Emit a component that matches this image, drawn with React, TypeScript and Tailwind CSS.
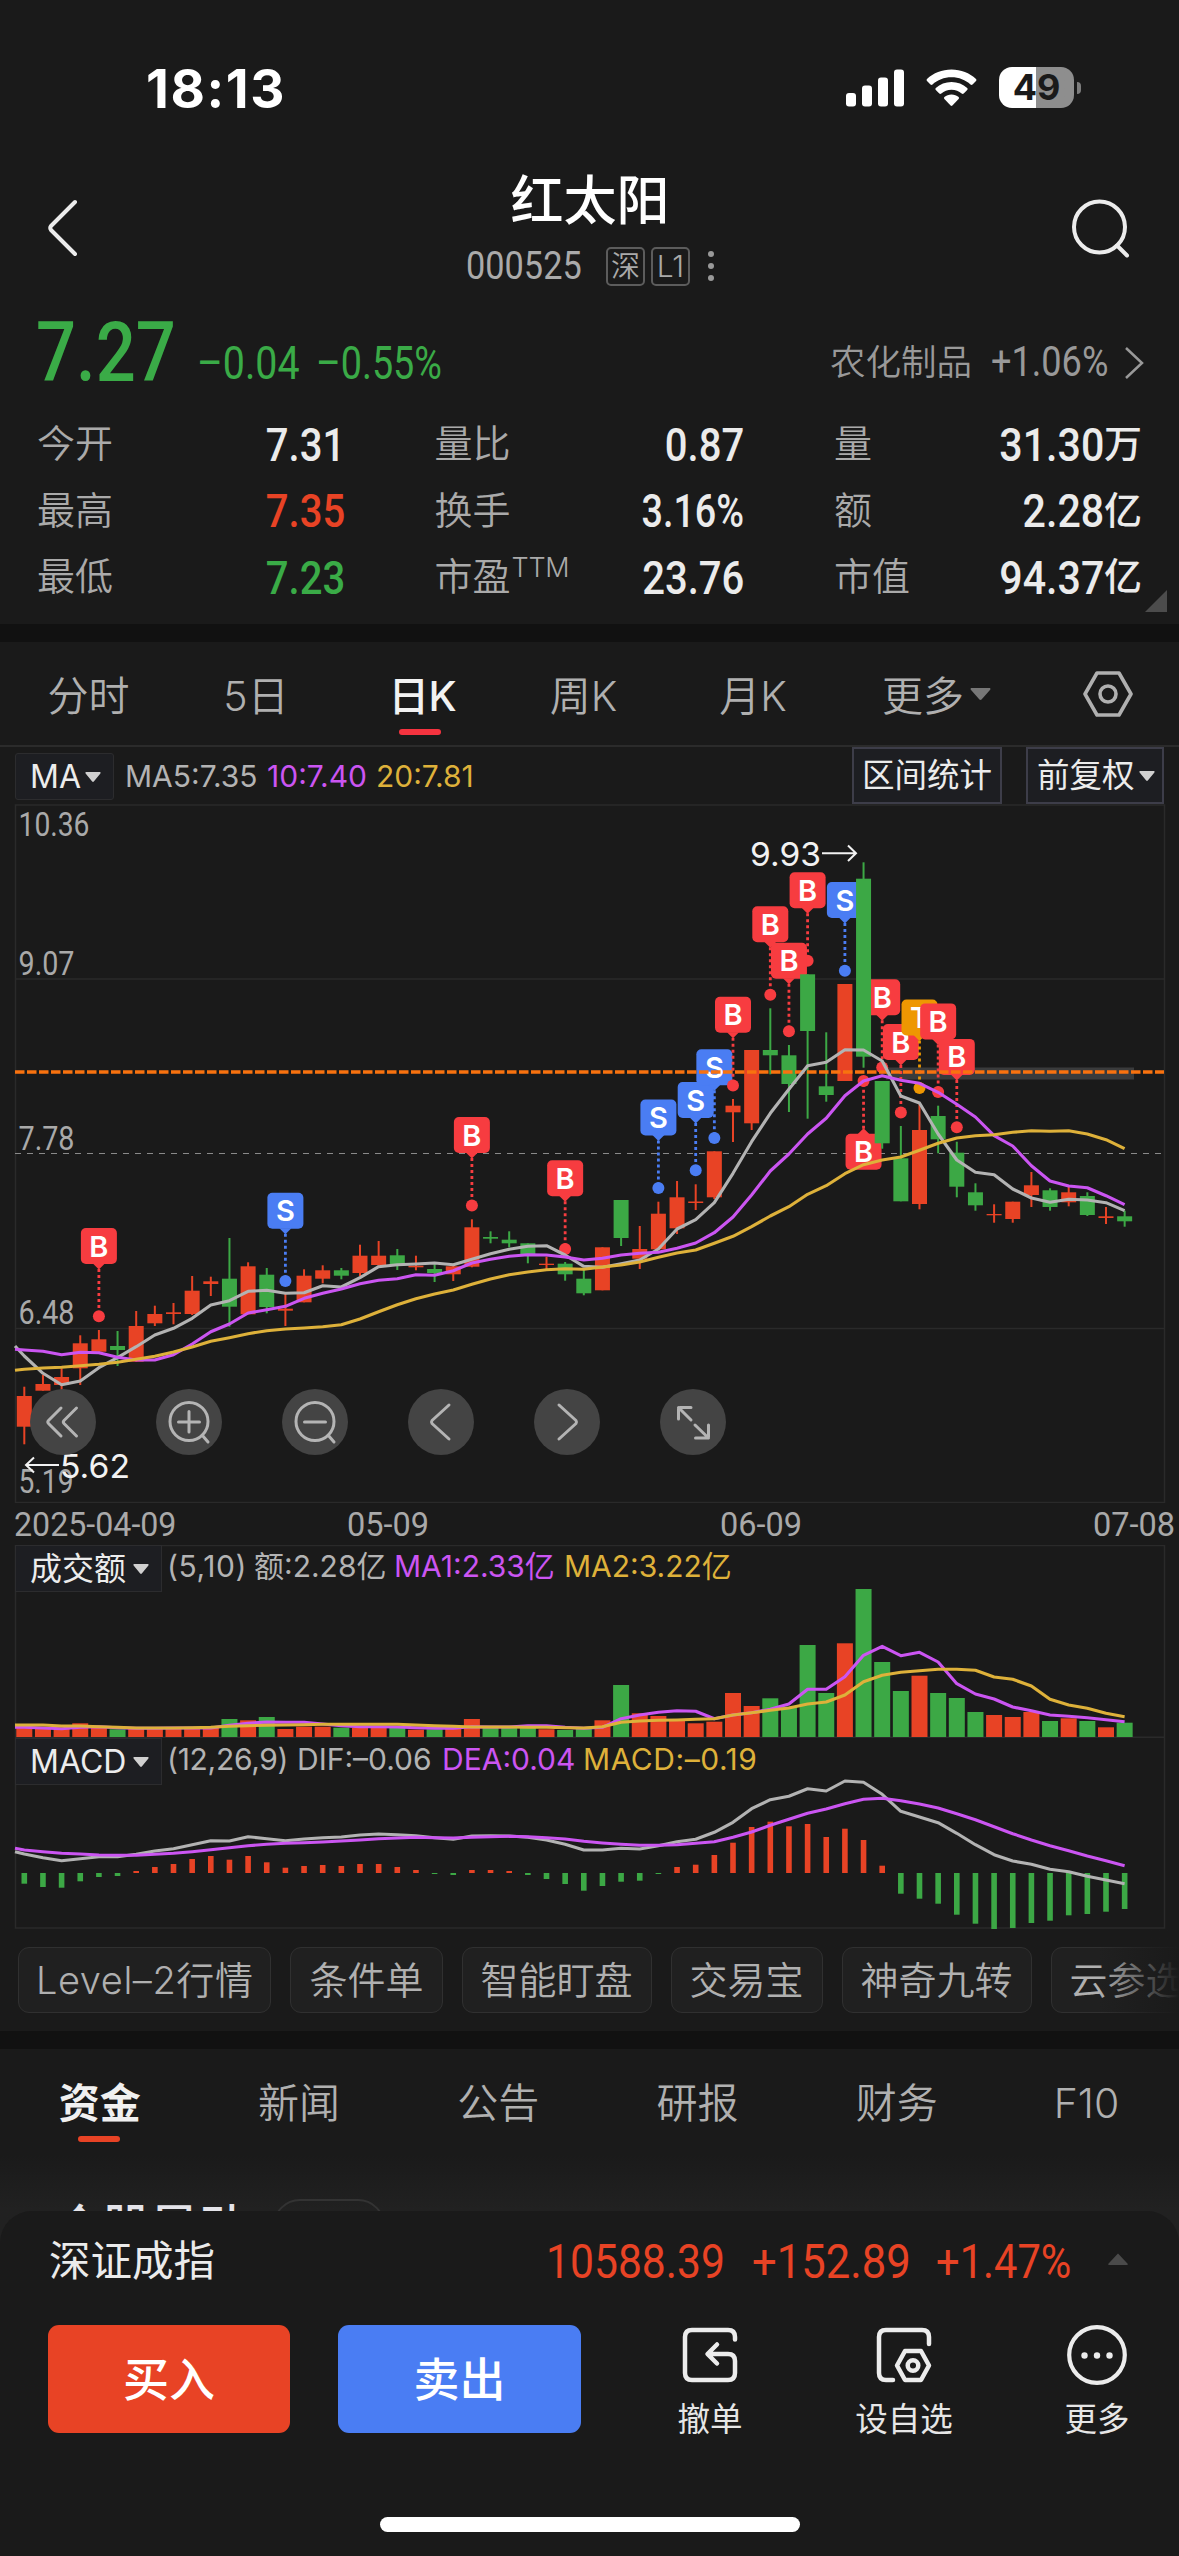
import type { ReactNode } from 'react';
import clsx from 'clsx';

type Candle = [up: number, high: number, top: number, bottom: number, low: number];

const UP = '#e84325';
const DOWN = '#3ca845';
const GRAY = '#b3b3b3';
const PURPLE = '#cb55f2';
const YELLOW = '#deb13a';

const STEP = 18.65;
const cx = (i: number) => 24.3 + i * STEP;

const candles: Candle[] = [
  [1, 1386.7, 1396, 1426.7, 1444.3], [1, 1375, 1384, 1390.7, 1390.7], [1, 1368.3, 1377, 1385, 1391.7],
  [1, 1335.3, 1343.3, 1368.3, 1385], [1, 1330, 1339.3, 1351.7, 1351.7], [0, 1331, 1346, 1350, 1366],
  [1, 1311, 1326, 1361.7, 1361.7], [1, 1305.7, 1314, 1323.3, 1326], [1, 1303, 1312.3, 1314, 1324.3],
  [1, 1276, 1290.7, 1314, 1315], [1, 1276.7, 1281.3, 1284, 1296], [0, 1238, 1278.7, 1306.7, 1326.7],
  [1, 1262.3, 1266.3, 1314.3, 1314.3], [0, 1268, 1274.7, 1307, 1313.3], [1, 1293.3, 1308.7, 1310.7, 1326],
  [1, 1269.3, 1275.7, 1302.3, 1302.3], [1, 1265.3, 1270.3, 1278.7, 1283.3], [0, 1268, 1270.3, 1275.7, 1279.3],
  [1, 1244.7, 1255.7, 1273, 1276], [1, 1241, 1255.7, 1265, 1265.7], [0, 1249, 1255.3, 1265.3, 1270],
  [1, 1255.7, 1265.7, 1267.3, 1270.3], [0, 1264.3, 1269, 1273, 1282], [1, 1265.3, 1266.3, 1274.3, 1281],
  [1, 1219.3, 1227.3, 1266.7, 1267.3], [0, 1231.3, 1237, 1238.7, 1243.3], [0, 1231.3, 1239.7, 1243.3, 1247.3],
  [0, 1243.3, 1243.3, 1255, 1263.3], [1, 1256.7, 1263.7, 1265, 1269], [0, 1262, 1263.7, 1274.3, 1280.7],
  [0, 1270, 1278.7, 1293.3, 1295.3], [1, 1247.3, 1247.3, 1290.3, 1290.3], [0, 1200, 1200, 1238, 1246],
  [1, 1226, 1249, 1258.7, 1269], [1, 1201.7, 1213.7, 1249.3, 1249.3], [1, 1181, 1197.3, 1228.3, 1234],
  [1, 1184.3, 1201.5, 1203, 1210], [1, 1151.3, 1151.3, 1197.3, 1199], [1, 1099, 1105.7, 1112.3, 1142],
  [1, 1050, 1050, 1123.3, 1130], [0, 1008.3, 1050, 1055.3, 1074.3], [0, 1045, 1055.3, 1084, 1112],
  [0, 974.3, 974.3, 1031, 1118.7], [0, 1032.3, 1086.3, 1095, 1101.7], [1, 984, 984, 1081, 1081],
  [0, 862.3, 878.7, 1056.7, 1067.7], [0, 1081, 1081, 1143.3, 1148.7], [0, 1126, 1158.3, 1201.3, 1201.3],
  [1, 1102.7, 1130, 1204, 1209.3], [0, 1105.7, 1116, 1139.3, 1153.3], [0, 1141.7, 1152.7, 1186.7, 1197.3],
  [0, 1183.3, 1192.3, 1205.3, 1210.7], [1, 1204.3, 1214, 1215.3, 1222.7], [1, 1201.7, 1201.7, 1219, 1222.7],
  [1, 1172, 1185.3, 1195, 1207], [0, 1188.3, 1190.3, 1207, 1210.7], [1, 1186.7, 1192.3, 1202.3, 1206.3],
  [0, 1192.3, 1196, 1215, 1216], [1, 1207, 1216.3, 1218, 1224], [0, 1210.7, 1216.3, 1221.3, 1226.7],
];

// moving averages, first value sits on the left frame edge
const ma5 = [
  1346, 1356, 1373.3, 1384.7, 1381, 1367.7, 1357.7, 1346.7, 1335, 1328.3, 1318.3, 1305, 1300.7, 1291.3, 1290.3,
  1293.3, 1292.7, 1285.7, 1287, 1277.7, 1266.7, 1264.7, 1264, 1263, 1264.7, 1259.3, 1253.7, 1249.3, 1246.3, 1245.7,
  1255, 1266.3, 1267.3, 1263.7, 1260, 1249, 1229, 1219.7, 1202.7, 1173.3, 1141.7, 1113.3, 1089.3, 1065.7, 1062.3,
  1049.7, 1050, 1061, 1096, 1103, 1134, 1160, 1172.3, 1174.7, 1189, 1198, 1202.3, 1199.3, 1200, 1202.7, 1210.7,
];
const ma10 = [
  1349.3, 1350, 1351.3, 1354.7, 1352.3, 1352.7, 1357.3, 1360, 1360, 1354.7, 1344, 1331.7, 1324, 1313, 1309.7,
  1306.3, 1298.3, 1293.3, 1289, 1283.7, 1280.3, 1278.7, 1274.7, 1275.3, 1270.7, 1263, 1259.3, 1256.3, 1254.7, 1255,
  1257, 1260, 1258.3, 1255, 1253.3, 1252.3, 1248.3, 1243, 1232.7, 1217, 1195, 1171, 1154, 1134, 1118.3, 1095.7,
  1081, 1075.7, 1080.3, 1083.3, 1092.3, 1104.3, 1117, 1135.7, 1146, 1165.7, 1181, 1186, 1187.7, 1195.7, 1204.7,
];
const ma20 = [
  1370.3, 1369.3, 1368, 1367.3, 1365.7, 1364.3, 1362.3, 1359.3, 1356.3, 1352, 1347, 1341.3, 1337.7, 1333.7, 1330.7,
  1329, 1328, 1326.7, 1324.7, 1319, 1311.7, 1304.7, 1298.7, 1294, 1290, 1284.3, 1279, 1274.7, 1272, 1269.7, 1268.7,
  1269.3, 1267, 1265, 1262, 1257.3, 1253, 1250, 1243.3, 1236.3, 1226.7, 1216, 1206.7, 1194.3, 1185.7, 1173.7,
  1164.7, 1160, 1157, 1150.3, 1143.3, 1138, 1135.7, 1134.7, 1132.3, 1130.7, 1131.3, 1130.7, 1134, 1139.7, 1148.7,
];

const volume = [
  1727.3, 1727.7, 1727.7, 1723.3, 1727.3, 1729.3, 1728.7, 1728, 1728.7, 1729, 1728, 1719, 1720.3, 1717, 1729, 1726.7,
  1726.7, 1727.7, 1728, 1727.7, 1728, 1729.7, 1729.3, 1728.7, 1719, 1728, 1728, 1728, 1729.3, 1730, 1728.7, 1720.3,
  1685, 1713.3, 1716, 1720, 1723.3, 1721.7, 1693, 1706, 1698.3, 1706.7, 1645, 1693, 1643.3, 1589, 1662, 1691, 1675.7,
  1693, 1698, 1712, 1715, 1717, 1712, 1721, 1718.3, 1721, 1727.3, 1722.7,
];
const volMa1 = [
  1727.3, 1727.3, 1728, 1728.7, 1727.3, 1726.7, 1727.7, 1728.3, 1728.2, 1728, 1728, 1728, 1725.3, 1723.3, 1722,
  1722.3, 1722.3, 1724, 1725.7, 1726.7, 1726.8, 1727, 1727.7, 1728.3, 1728.3, 1726.7, 1727, 1727, 1725.7, 1725.7,
  1727.3, 1728.3, 1727.3, 1718.7, 1715, 1712.3, 1710.7, 1711.3, 1718.7, 1715, 1712.7, 1709.3, 1704, 1689.3, 1689.3,
  1676.7, 1655.3, 1646.3, 1655.7, 1652.3, 1662, 1683.7, 1694, 1699, 1707, 1710.7, 1715, 1716.3, 1717.7, 1719.7,
  1721.7,
];
const volMa2 = [
  1725, 1725, 1725, 1726, 1726, 1726.7, 1727.3, 1728, 1728, 1728, 1727.7, 1727.3, 1726.3, 1725.7, 1725.3, 1725,
  1724.7, 1724.3, 1724.3, 1724.3, 1724.3, 1724.3, 1725, 1725.7, 1726.3, 1727, 1727, 1727, 1727.2, 1727.3, 1727.7,
  1728, 1726.7, 1722.3, 1721, 1720.3, 1720, 1719.3, 1718.7, 1715, 1712.7, 1710.3, 1708, 1704, 1702, 1695, 1681.7,
  1675.3, 1672.3, 1670.7, 1669.3, 1669.3, 1670.3, 1677, 1679.3, 1686, 1699.3, 1705, 1708.3, 1713.3, 1716.7,
];

const macd = [
  10.7, 14, 14.7, 8.3, 4, 3, -2, -6, -9, -14, -17, -13.3, -17, -10.7, -5.3, -7, -8, -7, -9, -9, -6, -3, 1, 2, -3, -3,
  -2, 2, 6, 11, 17.7, 13, 8.7, 7.7, 1, -6, -8.3, -18, -30.3, -46, -51.3, -46.7, -49, -36, -44.3, -33, -7.3, 20.7,
  25.7, 30.7, 41.7, 50.7, 56, 55, 50, 47.7, 42.3, 41, 38.7, 36,
];
const dif = [
  1851.7, 1854, 1857.7, 1860.7, 1858.7, 1856.7, 1856.7, 1854.3, 1851, 1848.7, 1844.7, 1840.7, 1841, 1836.7, 1838.7,
  1840.7, 1839, 1837.7, 1837, 1835, 1834, 1834.7, 1835.7, 1837.7, 1839.3, 1836, 1835.7, 1836, 1837.3, 1840, 1844.3,
  1850, 1850, 1848.3, 1849, 1845.7, 1841.7, 1839.3, 1832.3, 1822.3, 1808.7, 1799.7, 1796.3, 1788.7, 1791, 1781,
  1782.3, 1794.3, 1811.3, 1817, 1822.7, 1833.3, 1844.7, 1854.7, 1861, 1864.3, 1869.3, 1871.7, 1876.3, 1880, 1883.7,
];
const dea = [
  1848.3, 1850, 1851.7, 1853.3, 1854, 1855, 1855.3, 1855.3, 1854.3, 1853.3, 1851.7, 1849.7, 1847.7, 1845.7, 1844.3,
  1843.3, 1842.7, 1842, 1841, 1840, 1838.7, 1838, 1837.3, 1837.7, 1838, 1837.3, 1836.7, 1836.3, 1836.7, 1837.7, 1839,
  1841.3, 1843, 1844.3, 1845.3, 1845.3, 1844.7, 1843.3, 1841.7, 1837.3, 1832, 1825.3, 1819.3, 1813.3, 1809, 1803.7,
  1799.3, 1798.3, 1800.7, 1804, 1808, 1813.7, 1819.7, 1826.7, 1833.7, 1840, 1845.7, 1850.7, 1856, 1860.7, 1865.7,
];

interface Trade {
  i: number;
  side: 'B' | 'S' | 'T';
  top: number;
  dot: number;
}

const trades: Trade[] = [
  { i: 4, side: 'B', top: 1228, dot: 1316.3 },
  { i: 14, side: 'S', top: 1192.7, dot: 1281 },
  { i: 24, side: 'B', top: 1117, dot: 1205.6 },
  { i: 29, side: 'B', top: 1160.2, dot: 1249 },
  { i: 34, side: 'S', top: 1099.5, dot: 1188 },
  { i: 36, side: 'S', top: 1082, dot: 1170.3 },
  { i: 37, side: 'S', top: 1049.3, dot: 1138 },
  { i: 38, side: 'B', top: 996.8, dot: 1085.6 },
  { i: 40, side: 'B', top: 906.3, dot: 994.8 },
  { i: 42, side: 'B', top: 872.2, dot: 960.8 },
  { i: 41, side: 'B', top: 942.7, dot: 1031.3 },
  { i: 44, side: 'S', top: 882, dot: 970.7 },
  { i: 45, side: 'B', top: 1133.8, dot: 1081 },
  { i: 46, side: 'B', top: 979.2, dot: 1067.5 },
  { i: 47, side: 'B', top: 1024, dot: 1112.4 },
  { i: 48, side: 'T', top: 999.5, dot: 1088 },
  { i: 49, side: 'B', top: 1003.4, dot: 1092 },
  { i: 50, side: 'B', top: 1038.9, dot: 1127.3 },
];

const sideColor = { B: '#f73c40', S: '#4a7df3', T: '#ee9702' };

const toLine = (ys: number[]) =>
  ys.map((y, n) => `${n === 0 ? 15 : cx(n - 1).toFixed(1)},${y}`).join(' ');

function Line({ ys, color }: { ys: number[]; color: string }) {
  return <polyline points={toLine(ys)} fill="none" stroke={color} strokeWidth={3.1} strokeLinejoin="round" />;
}

function TradeMark({ i, side, top, dot }: Trade) {
  const x = cx(i);
  const c = sideColor[side];
  const below = top > dot;
  const from = below ? top - 5 : top + 41;
  return (
    <g>
      <line x1={x} x2={x} y1={from} y2={dot} stroke={c} strokeWidth={2.8} strokeDasharray="3 3" />
      <circle cx={x} cy={dot} r={6} fill={c} />
      <rect x={x - 18} y={top} width={36} height={36} rx={5} fill={c} />
      {below ? (
        <path d={`M${x - 6} ${top + 0.5}L${x} ${top - 5.5}L${x + 6} ${top + 0.5}Z`} fill={c} />
      ) : (
        <path d={`M${x - 6} ${top + 35.5}L${x} ${top + 41.5}L${x + 6} ${top + 35.5}Z`} fill={c} />
      )}
      <text x={x} y={top + 28.5} textAnchor="middle" fill="#fff" className="font-['Inter'] text-[29px] font-semibold">
        {side}
      </text>
    </g>
  );
}

function PriceChart() {
  const labels: [string, number, number][] = [
    ['10.36', 836, 71], ['9.07', 975, 56], ['7.78', 1149.5, 56], ['6.48', 1323.5, 56], ['5.19', 1492.5, 55],
  ];
  return (
    <svg width={1179} height={699} viewBox="0 804 1179 699" className="block">
      <path d="M15.5 1503V805H1164.5V1503" fill="none" stroke="#2a2a2a" strokeWidth={1.5} />
      <path d="M15 979H1164M15 1328.5H1164M15 1502.5H1165" stroke="#2a2a2a" strokeWidth={1.5} />
      <path d="M15 1153.5H1164" stroke="#8a8a8a" strokeWidth={1} strokeDasharray="6 6" />
      {labels.map(([t, y, w]) => (
        <text key={t} x={18.5} y={y} textLength={w} lengthAdjust="spacingAndGlyphs" fill="#a9a9a9" className="font-['Roboto'] text-[32.5px]">
          {t}
        </text>
      ))}
      <rect x={886} y={1067.5} width={248} height={12} fill="#3a3b3c" />
      {trades.map((t) => (
        <TradeMark key={t.i} {...t} />
      ))}
      {candles.map(([up, high, top, bottom, low], i) => (
        <g key={i} fill={up ? UP : DOWN}>
          <rect x={cx(i) - 1} y={high} width={2} height={low - high} />
          <rect x={cx(i) - 7.5} y={top} width={15} height={bottom - top} />
        </g>
      ))}
      <path d="M15 1072H1164" stroke="#f8720f" strokeWidth={3.4} strokeDasharray="9.500 2.500" />
      <Line ys={ma5} color={GRAY} />
      <Line ys={ma10} color={PURPLE} />
      <Line ys={ma20} color={YELLOW} />
      <g fill="#f2f2f2" className="font-['Inter'] text-[33px]">
        <text x={750} y={865.5} textLength={71} lengthAdjust="spacingAndGlyphs">9.93</text>
        <text x={60} y={1478} textLength={70} lengthAdjust="spacingAndGlyphs">5.62</text>
      </g>
      <path d="M822 853.3H855M848 845.5L856 853.3L848 861M59 1465H26M34 1457.5L26 1465L34 1472.5" fill="none" stroke="#f2f2f2" strokeWidth={2} />
    </svg>
  );
}

function ChartControls() {
  const icons: ReactNode[] = [
    <path d="M31 19L18.500 31.500Q17 33 18.500 34.500L31 47M46.500 19L34 31.500Q32.500 33 34 34.500L46.500 47" />,
    <path d="M33 13.5A19 19 0 1 0 33 51.5A19 19 0 1 0 33 13.5M46 46L52 53M33 22.5V43M22.5 33H43.5" />,
    <path d="M33 13.5A19 19 0 1 0 33 51.5A19 19 0 1 0 33 13.5M46 46L52 53M22.5 33H43.5" />,
    <path d="M41 16L24 31.5Q23 33 24 34.5L41 50" />,
    <path d="M25 16L42 31.5Q43 33 42 34.5L25 50" />,
    <path d="M31 18.5H20Q18.500 18.500 18.500 20V30M18.500 18.500L31 31M35 36L48.500 49M48.500 36V47.500Q48.500 49 47 49H35.500" />,
  ];
  return (
    <div className="absolute left-[30px] top-[585px] flex gap-[60px]">
      {icons.map((icon, i) => (
        <button key={i} className="size-[66px] rounded-full bg-[#444444]">
          <svg width={66} height={66} viewBox="0 0 66 66" fill="none" stroke="#b4b4b4" strokeWidth={3} strokeLinecap="round" strokeLinejoin="round">
            {icon}
          </svg>
        </button>
      ))}
    </div>
  );
}

function Caret({ className = '', up = false }: { className?: string; up?: boolean }) {
  return (
    <svg viewBox="0 0 20 12" preserveAspectRatio="none" className={clsx('shrink-0', className)} fill="currentColor">
      {up ? <path d="M10 0.500L19 11Q19 12 18 12H2Q1 12 1 11Z" /> : <path d="M1 0H19Q20 1 19 2L11 11.500Q10 12.300 9 11.500L1 2Q0 1 1 0Z" />}
    </svg>
  );
}

// condensed figures, scaled inside a box of known width
function Din({ children, className = '' }: { children: ReactNode; className?: string }) {
  return <span className={clsx("inline-block origin-left whitespace-nowrap font-['Roboto']", className)}>{children}</span>;
}

function VolumeChart() {
  return (
    <div className="relative h-[193px]">
      <svg width={1179} height={193} viewBox="0 1545 1179 193" className="block">
        <path d="M15.5 1738V1545.500H1164.500V1738M15 1737.300H1164" fill="none" stroke="#2a2a2a" strokeWidth={1.5} />
        {volume.map((y, i) => (
          <rect key={i} x={cx(i) - 8} y={y} width={16} height={1737 - y} fill={candles[i][0] ? UP : DOWN} />
        ))}
        <Line ys={volMa1} color={PURPLE} />
        <Line ys={volMa2} color={YELLOW} />
      </svg>
      <IndicatorHeader name="成交额">
        <span className="w-[87px] tracking-[0.02em]">(5,10)</span>
        <span className="w-[140px]">额:2.28亿</span>
        <span className="w-[170px] text-[#cb55f2]">MA1:2.33亿</span>
        <span className="text-[#deb13a]">MA2:3.22亿</span>
      </IndicatorHeader>
    </div>
  );
}

function MacdChart() {
  return (
    <div className="relative h-[191px]">
      <svg width={1179} height={191} viewBox="0 1738 1179 191" className="block">
        <path d="M15.5 1738V1928H1164.500V1738" fill="none" stroke="#2a2a2a" strokeWidth={1.5} />
        {macd.map((v, i) => (
          <rect key={i} x={cx(i) - 2.8} y={v < 0 ? 1873 + v : 1873} width={5.6} height={Math.abs(v)} fill={v < 0 ? UP : DOWN} />
        ))}
        <Line ys={dif} color={GRAY} />
        <Line ys={dea} color={PURPLE} />
      </svg>
      <IndicatorHeader name="MACD">
        <span className="w-[130px] tracking-[-0.01em]">(12,26,9)</span>
        <span className="w-[145px]">DIF:–0.06</span>
        <span className="w-[141px] text-[#cb55f2]">DEA:0.04</span>
        <span className="tracking-[0.018em] text-[#deb13a]">MACD:–0.19</span>
      </IndicatorHeader>
    </div>
  );
}

function IndicatorHeader({ name, children }: { name: string; children: ReactNode }) {
  return (
    <div className="absolute left-[15px] top-0 flex h-[47px]">
      <button className="flex w-[147px] items-center border border-[#2c2c2e] bg-[#1d1e22] pl-[14px] text-[32px] text-[#ececec]">
        <span className="w-[99px] text-left">{name}</span>
        <Caret className="ml-[4px] h-[10px] w-[16px] text-[#d0d0d0]" />
      </button>
      <div className="flex whitespace-nowrap pl-[5px] text-[30px] leading-[43px] text-[#b3b3b3]">{children}</div>
    </div>
  );
}

function StatusBar() {
  return (
    <div className="flex h-[150px] items-start pl-[146px] pt-[59px]">
      <div className="w-[700px] font-['Inter'] text-[53px] font-bold leading-[60px] tracking-[0.03em] text-white">18:13</div>
      <svg width={58} height={38} viewBox="0 0 58 38" className="mt-[10px]" fill="#fff">
        <rect x={0} y={24} width={10} height={13.5} rx={3} />
        <rect x={16} y={16.500} width={10} height={21} rx={3} />
        <rect x={32} y={8.500} width={10} height={29} rx={3} />
        <rect x={48} y={0.500} width={10} height={37} rx={3} />
      </svg>
      <svg width={51} height={38} viewBox="0 0 51 38" className="ml-[22px] mt-[10px]" fill="#fff">
        <path d="M25.500 0.500C35 0.500 43.500 4 50 10Q51 11 50 12L46.500 15.500Q45.500 16.400 44.500 15.500C39.500 11 33 8.300 25.500 8.300C18 8.300 11.500 11 6.500 15.500Q5.500 16.400 4.500 15.500L1 12Q0 11 1 10C7.500 4 16 0.500 25.500 0.500Z" />
        <path d="M25.500 13C31.500 13 37 15.200 41.200 19Q42.200 20 41.200 21L37.700 24.500Q36.700 25.300 35.700 24.500C33 22 29.500 20.700 25.500 20.700C21.500 20.700 18 22 15.300 24.500Q14.300 25.300 13.300 24.500L9.800 21Q8.800 20 9.800 19C14 15.200 19.500 13 25.500 13Z" />
        <path d="M25.500 25.500C28.300 25.500 30.700 26.500 32.600 28Q33.500 29 32.600 30L26.400 36.500Q25.500 37.400 24.600 36.500L18.400 30Q17.500 29 18.400 28C20.300 26.500 22.700 25.500 25.500 25.500Z" />
      </svg>
      <div className="ml-[22px] mt-[8px] flex h-[41px] w-[75px] items-center justify-center rounded-[13px] bg-gradient-to-r from-white from-50% to-[#8e8e8e] to-50% font-['Inter'] text-[36px] font-bold leading-[41px] text-[#1a1a1a]">
        49
      </div>
      <div className="ml-[3px] mt-[23px] h-[12px] w-[4px] rounded-r-full bg-[#7d7d7d]" />
    </div>
  );
}

function Header() {
  return (
    <div className="flex h-[150px]">
      <svg width={440} height={150} viewBox="0 0 440 150" fill="none" stroke="#ececec" strokeWidth={4} strokeLinecap="round" strokeLinejoin="round">
        <path d="M75 52L51 76Q49.500 78 51 80L75 104" />
      </svg>
      <div className="flex w-[300px] flex-col items-center">
        <h1 className="mt-[13px] h-[76px] text-[53px] font-medium leading-[76px] text-white">红太阳</h1>
        <div className="mt-[4px] flex w-full items-center pl-[26px] text-[#aaaaaa]">
          <div className="w-[140px]">
            <Din className="scale-x-[.88] text-[39px] leading-[46px]">000525</Din>
          </div>
          <span className="flex size-[39px] items-center justify-center rounded-[5px] border-2 border-[#5c5c5c] text-[29px] font-[350] leading-none">深</span>
          <span className="ml-[6px] flex size-[39px] items-center justify-center rounded-[5px] border-2 border-[#5c5c5c] font-['Inter'] text-[30px] font-light leading-none">L1</span>
          <span className="ml-[18px] flex flex-col gap-[6px]">
            <i className="size-[6px] rounded-full bg-[#999]" />
            <i className="size-[6px] rounded-full bg-[#999]" />
            <i className="size-[6px] rounded-full bg-[#999]" />
          </span>
        </div>
      </div>
      <svg width={439} height={150} viewBox="740 150 439 150" fill="none" stroke="#ececec" strokeWidth={4} strokeLinecap="round">
        <circle cx={1099.500} cy={227} r={25.500} />
        <path d="M1117 245.500L1127 255.500" />
      </svg>
    </div>
  );
}

function QuoteRow() {
  return (
    <div className="flex h-[100px] pl-[36px] text-[#3aab47]">
      <div className="w-[161px]">
        <Din className="scale-x-[.85] text-[83px] font-medium leading-[105px]">7.27</Din>
      </div>
      <div className="w-[119px] pt-[37px]">
        <Din className="scale-x-[.855] text-[46px] leading-[52px]">–0.04</Din>
      </div>
      <div className="w-[514px] pt-[37px]">
        <Din className="scale-x-[.82] text-[46px] leading-[52px]">–0.55%</Din>
      </div>
      <div className="w-[161px] pt-[38px] text-[35.500px] font-[350] leading-[50px] text-[#999]">农化制品</div>
      <div className="w-[133px] pt-[37px] text-[#999]">
        <Din className="scale-x-[.86] text-[42px] leading-[50px]">+1.06%</Din>
      </div>
      <svg width={22} height={32} viewBox="0 0 22 32" className="mt-[47px]" fill="none" stroke="#999" strokeWidth={2.500}>
        <path d="M2 1L18 16L2 31" />
      </svg>
    </div>
  );
}

interface StatProps {
  label: string;
  value: string;
  unit?: string;
  sup?: string;
  color?: string;
}

const stats: StatProps[] = [
  { label: '今开', value: '7.31' },
  { label: '量比', value: '0.87' },
  { label: '量', value: '31.30', unit: '万' },
  { label: '最高', value: '7.35', color: 'text-[#e84325]' },
  { label: '换手', value: '3.16%' },
  { label: '额', value: '2.28', unit: '亿' },
  { label: '最低', value: '7.23', color: 'text-[#3aab47]' },
  { label: '市盈', sup: 'TTM', value: '23.76' },
  { label: '市值', value: '94.37', unit: '亿' },
];

const statScale = (s: StatProps) => {
  if (s.unit) return 'scale-x-[.895]';
  return s.value.endsWith('%') ? 'scale-x-[.82]' : 'scale-x-[.87]';
};

function Stats() {
  return (
    <div className="relative grid h-[224px] auto-rows-[66.5px] grid-cols-[305px_307px_307px] gap-x-[92.500px] pl-[37px] pt-[10px]">
      {stats.map((s) => (
        <div key={s.label} className="flex h-[66px] items-center whitespace-nowrap">
          <span className="text-[38px] font-[350] leading-[56px] text-[#aaaaaa]">{s.label}</span>
          {s.sup && <span className="mb-[18px] ml-[1px] font-['Inter'] text-[27px] font-light leading-none tracking-[-0.01em] text-[#aaaaaa]">{s.sup}</span>}
          <span className={clsx('ml-auto flex items-center', s.unit ? '-mr-[1px]' : '-mr-[3px]', s.color ?? 'text-[#ebebeb]')}>
            <Din className={clsx('origin-right! mt-[3px] text-[46px] font-medium leading-[56px]', statScale(s))}>{s.value}</Din>
            {s.unit && <span className="text-[38px] font-medium leading-[56px]">{s.unit}</span>}
          </span>
        </div>
      ))}
      <svg width={22} height={22} viewBox="0 0 22 22" className="absolute bottom-[12px] right-[12px]" fill="#4c4c4c">
        <path d="M22 0V22H0Z" />
      </svg>
    </div>
  );
}

function PeriodTabs() {
  return (
    <div className="flex h-[105px] items-center border-b-2 border-[#2b2b2b] pt-[4px] text-center text-[41px] font-[350] leading-[60px] text-[#b0b0b0]">
      <span className="w-[177px]">分时</span>
      <span className="w-[158px]">5日</span>
      <span className="relative w-[174px] font-medium tracking-[-0.02em] text-[#f2f2f2]">
        日K
        <i className="absolute left-[64px] top-[63px] h-[6px] w-[42px] rounded-full bg-[#f5333f]" />
      </span>
      <span className="w-[149px]">周K</span>
      <span className="w-[190px]">月K</span>
      <span className="flex w-[177px] items-center justify-center">
        更多
        <Caret className="mb-[3px] ml-[6px] h-[12px] w-[21px] text-[#777]" />
      </span>
      <svg width={50} height={50} viewBox="0 0 50 50" className="mb-[4px] ml-[58px] shrink-0" fill="none" stroke="#b0b0b0" strokeWidth={3.600} strokeLinejoin="round">
        <path d="M14 4H36L48 25L36 46H14L2 25Z" />
        <circle cx={25} cy={25} r={8} />
      </svg>
    </div>
  );
}

function MaRow() {
  return (
    <div className="flex h-[57px] pl-[15px] text-[30px]">
      <button className="mt-[6px] flex h-[47px] w-[99px] items-center rounded-[3px] border border-[#2c2c2e] bg-[#1d1e22] pl-[14px] text-[32px] text-[#ececec]">
        <span className="w-[52px] text-left">MA</span>
        <Caret className="ml-[3px] h-[10px] w-[16px] text-[#d0d0d0]" />
      </button>
      <div className="flex w-[738px] pl-[11px] leading-[59px] text-[#b3b3b3]">
        <span className="w-[142px]">MA5:7.35</span>
        <span className="w-[109px] text-[#cb55f2]">10:7.40</span>
        <span className="text-[#deb13a]">20:7.81</span>
      </div>
      <button className="flex w-[150px] items-center justify-center border-2 border-[#3d3d49] bg-[#1d1e22] pt-[2px] text-[32.500px] leading-none text-[#ececec]">区间统计</button>
      <button className="ml-[24px] flex w-[138px] items-center border-2 border-[#3d3d49] bg-[#1d1e22] pl-[9px] pt-[2px] text-[32.500px] leading-none text-[#ececec]">
        前复权
        <Caret className="mb-[2px] ml-[4px] h-[10px] w-[16px] text-[#d0d0d0]" />
      </button>
    </div>
  );
}

const chips = ['Level–2行情', '条件单', '智能盯盘', '交易宝', '神奇九转', '云参选股'];
const infoTabs = ['资金', '新闻', '公告', '研报', '财务', 'F10'];

function IndexSheet() {
  return (
    <div className="relative h-[345px] rounded-t-[32px] bg-[#1a1a1a]">
      <div className="flex h-[114px] pl-[49px] pt-[18px]">
        <span className="w-[497px] pt-[3px] text-[41.500px] leading-[58px] text-[#ebebeb]">深证成指</span>
        <div className="flex text-[49px] leading-[64px] text-[#e84325]">
          <div className="w-[206px]"><Din className="scale-x-[.87]">10588.39</Din></div>
          <div className="w-[184px]"><Din className="scale-x-[.89]">+152.89</Din></div>
          <div className="w-[171px]"><Din className="scale-x-[.85]">+1.47%</Din></div>
        </div>
        <Caret up className="mt-[24px] h-[12px] w-[22px] text-[#4a4a4a]" />
      </div>
      <div className="flex pl-[48px]">
        <button className="h-[108px] w-[242px] rounded-[11px] bg-[#e84325] text-[46px] font-medium leading-[108px] text-white">买入</button>
        <button className="ml-[48px] h-[108px] w-[243px] rounded-[11px] bg-[#4a7df3] text-[46px] font-medium leading-[108px] text-white">卖出</button>
        <div className="ml-[66px] flex w-[126px] flex-col items-center">
          <svg width={60} height={60} viewBox="0 0 60 60" fill="none" stroke="#ececec" strokeWidth={4.500} strokeLinecap="round" strokeLinejoin="round">
            <path d="M55 14.500V12Q55 5 48 5H12Q5 5 5 12V48Q5 55 12 55H48Q55 55 55 48V36Q55 29 48 29H28M37 19.500L27.500 29L37 38.500" />
          </svg>
          <span className="mt-[11px] text-[32.500px] leading-[48px] text-[#e6e6e6]">撤单</span>
        </div>
        <div className="ml-[68px] flex w-[126px] flex-col items-center">
          <svg width={60} height={60} viewBox="0 0 60 60" fill="none" stroke="#ececec" strokeWidth={4.500} strokeLinecap="round" strokeLinejoin="round">
            <path d="M55 19V12Q55 5 48 5H12Q5 5 5 12V48Q5 55 12 55H19M31 26H47L55 40.500L47 55H31L23 40.500Z" />
            <circle cx={39} cy={40.500} r={5.300} />
          </svg>
          <span className="mt-[11px] text-[32.500px] leading-[48px] text-[#e6e6e6]">设自选</span>
        </div>
        <div className="ml-[67px] flex w-[126px] flex-col items-center">
          <svg width={60} height={60} viewBox="0 0 60 60" fill="none" stroke="#ececec" strokeWidth={4.200}>
            <circle cx={30} cy={30} r={27.800} />
            <g fill="#ececec" stroke="none">
              <circle cx={17.500} cy={30.500} r={3.200} />
              <circle cx={30} cy={30.500} r={3.200} />
              <circle cx={42.500} cy={30.500} r={3.200} />
            </g>
          </svg>
          <span className="mt-[11px] text-[32.500px] leading-[48px] text-[#e6e6e6]">更多</span>
        </div>
      </div>
      <div className="absolute bottom-[24px] left-[380px] h-[15px] w-[420px] rounded-full bg-white" />
    </div>
  );
}

export default function App() {
  return (
    <div className="flex h-[2556px] w-[1179px] flex-col overflow-hidden bg-[#1a1a1a] font-['Inter','Noto_Sans_CJK_SC',sans-serif]">
      <StatusBar />
      <Header />
      <QuoteRow />
      <Stats />
      <div className="h-[18px] bg-[#111111]" />
      <PeriodTabs />
      <MaRow />
      <div className="relative h-[699px]">
        <PriceChart />
        <ChartControls />
      </div>
      <div className="flex h-[42px] pl-[14px] text-[32.500px] leading-[43px] text-[#a9a9a9]">
        <div className="w-[333px]"><Din className="scale-x-[.99]">2025-04-09</Din></div>
        <div className="w-[373px]"><Din>05-09</Din></div>
        <div className="w-[373px]"><Din>06-09</Din></div>
        <div className="w-[80px]"><Din>07-08</Din></div>
      </div>
      <VolumeChart />
      <MacdChart />
      <div className="relative flex h-[102px] gap-[19px] overflow-hidden pl-[18px] pt-[18px]">
        {chips.map((c, i) => (
          <span
            key={c}
            className={clsx(
              'h-[66px] shrink-0 whitespace-nowrap rounded-[11px] border border-[#303030] bg-[#202020] text-[38px] font-[350] leading-[65px] text-[#b0b0b0]',
              i === 0 ? 'px-[17px] tracking-[0.015em]' : 'px-[18px]',
            )}
          >
            {c}
          </span>
        ))}
        <div className="absolute right-0 top-0 h-full w-[80px] bg-gradient-to-r from-transparent to-[#1a1a1a]" />
      </div>
      <div className="h-[18px] bg-[#111111]" />
      <div className="flex h-[106px] pt-[24px] text-center text-[41px] font-[350] leading-[60px] text-[#b0b0b0]">
        {infoTabs.map((t, i) => (
          <span key={t} className={clsx(i === 5 ? 'w-[180px]' : 'w-[199.300px]', i === 0 && 'relative font-bold text-[#f0f0f0]')}>
            {t}
            {i === 0 && <i className="absolute left-[78px] top-[63px] h-[6px] w-[42px] rounded-full bg-[#e84325]" />}
          </span>
        ))}
      </div>
      <div className="-mb-[32px] h-[88px] bg-gradient-to-b from-[#1a1a1a] to-[#212121] to-60%">
        <div className="flex h-[56px] overflow-hidden pl-[55px] pt-[40px]">
          <span className="h-[70px] w-[194px] text-[48px] font-medium leading-[64px] text-[#e4e4ea]">个股异动</span>
          <span className="ml-[24px] mt-[4px] h-[54px] w-[112px] rounded-[27px] border-2 border-[#333]" />
        </div>
      </div>
      <IndexSheet />
    </div>
  );
}
